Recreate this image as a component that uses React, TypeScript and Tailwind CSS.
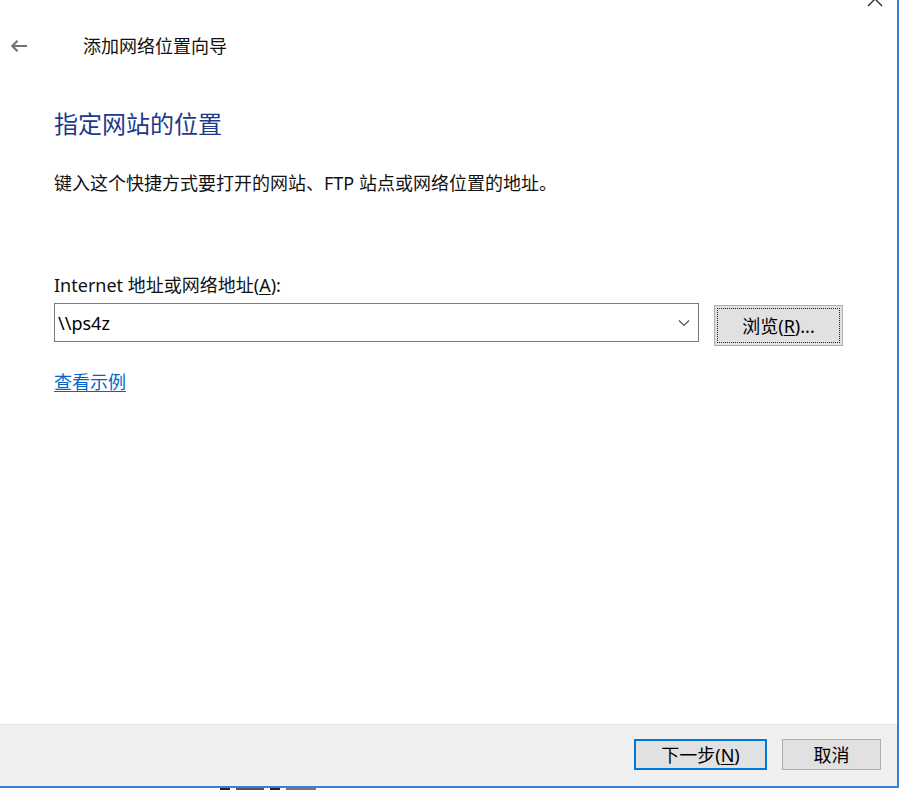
import React from 'react'

const font = { fontFamily: '"Noto Sans", "Noto Sans CJK SC", sans-serif' }

function Chevron() {
  return (
    <svg width="12" height="8" viewBox="0 0 12 8" fill="none">
      <path d="M1 1.5 L6 6.5 L11 1.5" stroke="#555" strokeWidth="1.2" />
    </svg>
  )
}

function BackArrow() {
  return (
    <svg width="18" height="14" viewBox="0 0 18 14" fill="none">
      <path d="M17 7 H2.5 M7.5 1.8 L2.3 7 L7.5 12.2" stroke="#737373" strokeWidth="2.2" />
    </svg>
  )
}

export default function App() {
  return (
    <div className="relative w-[901px] h-[790px] overflow-hidden bg-white text-black" style={font}>
      <div className="flex flex-col w-[899px] h-[788px] border-r-2 border-b-2 border-[#3b7fd4]">
        {/* close glyph cut off at top */}
        <svg className="absolute left-[866px] -top-[9px]" width="18" height="16" viewBox="0 0 18 16" fill="none">
          <path d="M2 1 L16 15 M16 1 L2 15" stroke="#222" strokeWidth="1.3" />
        </svg>

        <div className="flex-1 flex flex-col">
          <div className="flex items-center h-[26px] mt-[33px]">
            <div className="ml-[10px] w-[18px] flex items-center">
              <BackArrow />
            </div>
            <span className="ml-[55px] text-[18px] leading-[26px] text-[#111]">添加网络位置向导</span>
          </div>

          <div className="flex flex-col pl-[54px]">
            <h1 className="mt-[49px] text-[24px] leading-[32px] text-[#1c3a8c]">指定网站的位置</h1>
            <p className="mt-[30px] text-[18px] leading-[26px] text-[#111]">键入这个快捷方式要打开的网站、FTP 站点或网络位置的地址。</p>

            <label className="mt-[76px] text-[18px] leading-[26px] text-[#111]">
              Internet 地址或网络地址(<span className="underline underline-offset-2">A</span>):
            </label>

            <div className="flex items-start mt-[5px]">
              <div className="flex items-center justify-between w-[645px] h-[39px] border border-[#7a7a7a] bg-white pl-[3px] pr-[8px]">
                <span className="text-[18px] leading-[26px]">\\ps4z</span>
                <Chevron />
              </div>
              <button className="ml-[15px] mt-[2px] w-[129px] h-[41px] bg-[#e1e1e1] border border-[#adadad] p-[2px]">
                <div className="flex items-center justify-center w-full h-full border border-dotted border-[#222] text-[18px] leading-[26px]">
                  浏览(<span className="underline underline-offset-2">R</span>)...
                </div>
              </button>
            </div>

            <a className="mt-[23px] w-fit text-[18px] leading-[26px] text-[#0066cc] underline underline-offset-2">查看示例</a>
          </div>
        </div>

        <div className="flex items-start justify-end h-[62px] bg-[#f0f0f0] border-t border-[#e3e3e3] pt-[14px] pr-[16px] gap-[15px]">
          <button className="w-[133px] h-[31px] bg-[#e1e1e1] border-2 border-[#0078d7] text-[18px] leading-[26px] flex items-center justify-center">
            下一步(<span className="underline underline-offset-2">N</span>)
          </button>
          <button className="w-[99px] h-[31px] bg-[#e1e1e1] border border-[#adadad] text-[18px] leading-[26px] flex items-center justify-center">
            取消
          </button>
        </div>
      </div>
      <div className="h-[2px] overflow-hidden bg-white">
        <div className="ml-[220px] flex gap-[6px]">
          <div className="w-[10px] h-[2px] bg-[#222]" />
          <div className="w-[28px] h-[2px] bg-[#555]" />
          <div className="w-[10px] h-[2px] bg-[#222]" />
          <div className="w-[30px] h-[2px] bg-[#777]" />
        </div>
      </div>
    </div>
  )
}
